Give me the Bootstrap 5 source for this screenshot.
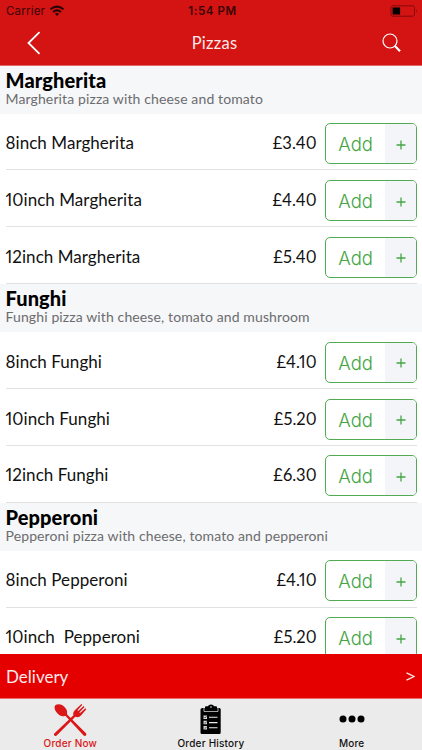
<!DOCTYPE html>
<html lang="en">
<head>
<meta charset="utf-8">
<meta name="viewport" content="width=device-width, initial-scale=1">
<title>Pizzas</title>
<link href="https://cdn.jsdelivr.net/npm/bootstrap@5.3.0/dist/css/bootstrap.min.css" rel="stylesheet">
<style>
  body { font-family: Lato, "Liberation Sans", sans-serif; color: #111; font-size: 17px; line-height: 1; font-variant-numeric: proportional-nums; }
  .status { height: 22px; font: 11.5px/22px Inter, sans-serif; color: #3a0506; padding: 0 4px 0 6px; letter-spacing: .2px; }
  .status .side { flex: 1 1 0; }
  .status strong { letter-spacing: .6px; padding-left: 1px; }
  .top { background: #d41313; height: 65.5px; border-bottom: 1px solid #e36a6c; }
  .titlebar { height: 42px; color: #fbe9e9; padding: 0 21px 0 27px; }
  .titlebar .side { flex: 1 1 0; }
  .page-name { font-size: 16.500px; letter-spacing: .25px; line-height: 20px; padding-left: 1px; }
  .menu-list { min-height: 0; }
  .group-head { background: #f6f7f9; height: 48.2px; padding: 3.4px 5.5px 0; flex: none; }
  .group-head h2 { font-size: 20px; font-weight: 900; line-height: 22px; margin: 0; color: #000; letter-spacing: .1px; }
  .group-head p { font-size: 14px; line-height: 15px; margin: 0; color: #6c6c6e; letter-spacing: .12px; white-space: nowrap; }
  .item { height: 56.8px; flex: none; margin: 0 5.5px; border-bottom: 1px solid #e1e1e3; padding-top: 9.6px; }
  .item .label, .item .price { line-height: 40.600px; white-space: pre; }
  .item .label { letter-spacing: .05px; }
  .item .price { margin-right: 8px; font-size: 16.500px; }
  .add { width: 92px; height: 41px; border: 1.3px solid #52aa52; border-radius: 5px; color: #45a545; background: #fff; overflow: hidden; padding: 0; }
  .add .word { font: 300 18.500px/40px Inter, sans-serif; width: 60px; text-align: center; padding-left: 1px; }
  .add .plus { background: #f4f5f8; width: 31px; display: flex; align-items: center; justify-content: center; padding: 2px 0 0 1px; }
  .delivery { height: 45px; background: #e50000; border-bottom: 1px solid #ee6b6b; color: #fdeaea; padding: 0 7px 0 6px; }
  .tabs { height: 51px; background: #ebebeb; font: 500 10px/12px Inter, sans-serif; color: #111; }
  .tabs .tab { flex: 1 1 0; color: inherit; padding-top: 4px; letter-spacing: .2px; }
  .tabs .tab.current { color: #dc1717; }
  .tabs svg { height: 34px; display: block; }
</style>
</head>
<body class="vh-100 overflow-hidden d-flex flex-column bg-white">
<header class="top flex-shrink-0">
  <div class="status d-flex align-items-center">
    <div class="side d-flex align-items-center"><span>Carrier</span>
      <svg class="ms-1" width="16" height="12" viewBox="0 0 16 12" fill="none" stroke="#260304" stroke-width="2"><path d="M1.500 4.200Q8-1 14.500 4.200M4 7Q8 3.800 12 7"/><path d="M5.900 8.800Q8 7.200 10.100 8.800L8 11Z" fill="#260304" stroke="none"/></svg>
    </div>
    <strong class="fw-semibold">1:54 PM</strong>
    <div class="side d-flex justify-content-end">
      <svg width="28" height="12" viewBox="0 0 28 12"><rect x="1" y=".8" width="23.500" height="10.400" rx="2" fill="none" stroke="#850b0d"/><rect x="2.600" y="2.500" width="7.500" height="7" fill="#000"/><path d="M26 4q1.600 2 0 4z" fill="#850b0d"/></svg>
    </div>
  </div>
  <nav class="titlebar d-flex align-items-center">
    <div class="side"><svg width="16" height="24" viewBox="0 0 16 24" fill="none" stroke="#fff" stroke-width="1.800"><path d="M12.500 1.200 1.500 12l11 10.800"/></svg></div>
    <span class="page-name">Pizzas</span>
    <div class="side d-flex justify-content-end"><svg width="19" height="20" viewBox="0 0 19 20" fill="none" stroke="#fff"><circle cx="8" cy="8" r="7" stroke-width="1.200"/><path d="m12.700 12.800 5.300 5.500" stroke-width="2.200"/></svg></div>
  </nav>
</header>
<main class="menu-list flex-grow-1 overflow-hidden d-flex flex-column" id="menu"></main>
<div class="delivery d-flex align-items-center justify-content-between flex-shrink-0"><span class="delivery-name">Delivery</span><svg width="9" height="9" viewBox="0 0 9 9" fill="none" stroke="#fdeaea" stroke-width="1.300"><path d="M.5.900 8 4.500.5 8.100"/></svg></div>
<footer class="tabs d-flex flex-shrink-0">
  <div class="tab current d-flex flex-column align-items-center">
    <svg width="34" viewBox="0 0 34 34" fill="currentColor"><path d="M2.300 2.200C5.500-.2 11 2 13.300 6.200c1.100 2 .7 3.800.9 5.200L33 30.300q1 2-.8 2.600-1 .2-1.800-.7L12.600 13.100c-1.700.2-4 .4-6-.9C2.400 9.500.300 4.700 2.300 2.200Z"/><path d="M1.300 30.500 20.500 12.300c-.8-2 0-3.700 1.800-5.500L28.400 1l.9.800-4.800 5.500.8.800L30.600 3l.9.900-5.200 5.500.8.700 5.300-4.800.9 1-5.100 5.900c-1.700 1.900-3.700 2.500-5.900 1.500L3.700 32.600c-1.300 1.300-3.800-.7-2.400-2.100Z"/></svg>
    <span>Order Now</span>
  </div>
  <div class="tab d-flex flex-column align-items-center">
    <svg width="22" viewBox="0 0 22 34"><path fill="#000" d="M2.500 5H5V4q0-.8 1-.8h2Q8.500 1.500 11 1.500t3 1.700h2q1 0 1 .8v1h2.500Q20.700 5 20.700 6.500v23q0 1.500-1.500 1.500H1.800Q.5 31 .5 29.500v-23Q.5 5 2.500 5Z"/><path d="M4 5v3.500h14V5" fill="none" stroke="#ebebeb" stroke-width=".7"/><circle cx="11" cy="4" r=".8" fill="#ebebeb"/><path d="M3.500 12.500H7V16H3.500zM3.500 17.800H7v3.500H3.500zM3.500 23H7v3.500H3.500z" fill="#d8d8d8"/><path d="m4.300 14.200.8.800 1.500-1.800M4.300 19.500l.8.800 1.500-1.800M4.300 24.700l.8.800 1.500-1.800" fill="none" stroke="#222" stroke-width=".7"/><path d="M9 14.300h8.500M9 19.600h8.500M9 24.800h8.500" stroke="#ebebeb" stroke-width="1.100"/></svg>
    <span>Order History</span>
  </div>
  <div class="tab d-flex flex-column align-items-center">
    <svg width="26" viewBox="0 0 26 34" fill="#000"><circle cx="4" cy="16" r="3.500"/><circle cx="13" cy="16" r="3.500"/><circle cx="22" cy="16" r="3.500"/></svg>
    <span>More</span>
  </div>
</footer>
<script src="https://cdn.jsdelivr.net/npm/bootstrap@5.3.0/dist/js/bootstrap.bundle.min.js"></script>
<script>
  const groups = [
    ['Margherita', 'Margherita pizza with cheese and tomato', [['8inch Margherita', '£3.40'], ['10inch Margherita', '£4.40'], ['12inch Margherita', '£5.40']]],
    ['Funghi', 'Funghi pizza with cheese, tomato and mushroom', [['8inch Funghi', '£4.10'], ['10inch Funghi', '£5.20'], ['12inch Funghi', '£6.30']]],
    ['Pepperoni', 'Pepperoni pizza with cheese, tomato and pepperoni', [['8inch Pepperoni', '£4.10'], ['10inch  Pepperoni', '£5.20']]]
  ];
  document.getElementById('menu').innerHTML = groups.map(([name, text, items]) =>
    `<div class="group-head"><h2>${name}</h2><p>${text}</p></div>` + items.map(([label, price]) =>
      `<div class="item d-flex align-items-start"><span class="label">${label}</span><span class="price ms-auto">${price}</span><button type="button" class="add d-flex align-items-stretch"><span class="word">Add</span><span class="plus"><svg width="10" height="10" viewBox="0 0 10 10" stroke="#45a545" stroke-width="1.300"><path d="M5 .5v9M.5 5h9"/></svg></span></button></div>`).join('')).join('');
</script>
</body>
</html>
